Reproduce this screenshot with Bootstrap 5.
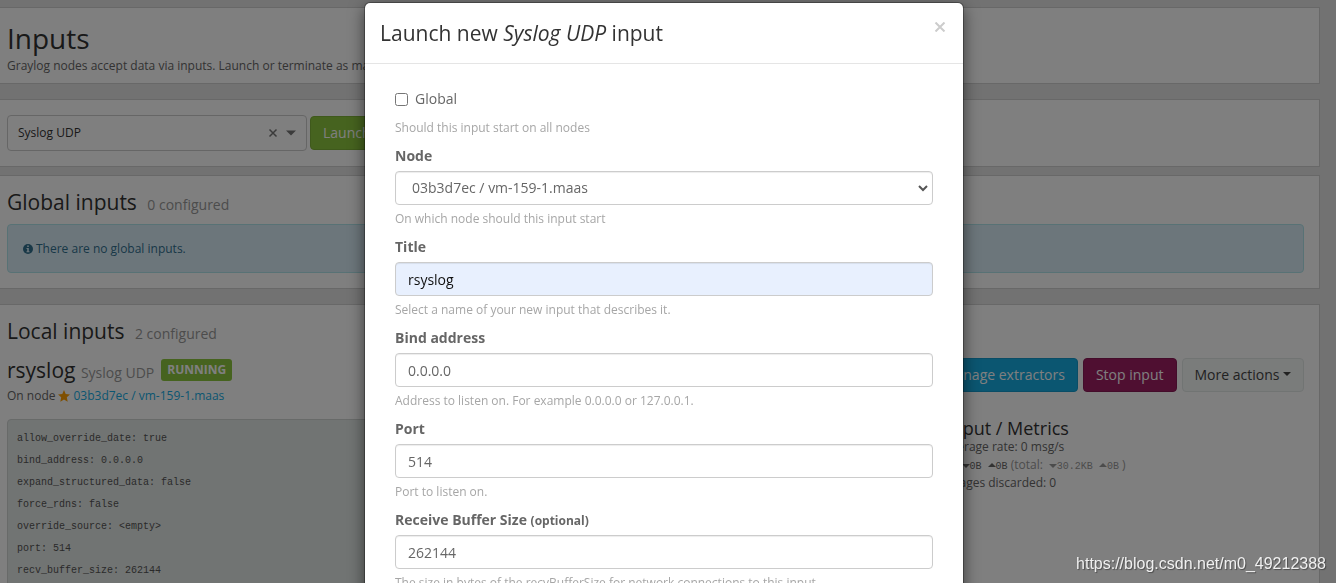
<!DOCTYPE html>
<html lang="en">
<head>
<meta charset="utf-8">
<meta name="viewport" content="width=device-width, initial-scale=1">
<title>Inputs</title>
<link href="https://cdn.jsdelivr.net/npm/bootstrap@5.3.0/dist/css/bootstrap.min.css" rel="stylesheet">
<style>
  body { background: #e5e5e5; color: #666; font-family: "Open Sans", sans-serif; font-size: 12px; line-height: 18px; overflow: hidden; }
  h1, h2, h3, h4 { font-weight: 400; color: #333; margin: 0; }
  .page { padding: 7px 16px 0 0; }
  .panel { background: #fff; border: 1px solid #d0d0d0; border-left: 0; padding: 12px 15px 15px 7px; margin-bottom: 15px; }
  .intro { padding-top: 14px; padding-bottom: 8px; }
  .launcher { padding-top: 15px; gap: 3px; }
  .panel h1 { font-size: 28px; line-height: 32px; margin-bottom: 3px; }
  .panel h2 { font-size: 21px; line-height: 28px; }
  .panel h3 { font-size: 18px; line-height: 20px; }
  .muted { color: #999; }
  .panel h2 small { font-size: 14px; line-height: 14px; }
  .count { margin-left: 5px; }
  .type-select { width: 300px; height: 36px; border: 1px solid #ccc; border-radius: 4px; padding: 0 10px; color: #333; font-size: 12px; background: #fff; }
  .btn { --bs-btn-font-size: 14px; --bs-btn-line-height: 20px; --bs-btn-padding-y: 6px; --bs-btn-padding-x: 12px; --bs-btn-border-radius: 4px; }
  .btn-launch { --bs-btn-bg: #8dc63f; --bs-btn-border-color: #7fb338; --bs-btn-color: #fff; }
  .btn-blue { --bs-btn-bg: #16ace3; --bs-btn-border-color: #149bcc; --bs-btn-color: #fff; }
  .btn-plum { --bs-btn-bg: #9e1f63; --bs-btn-border-color: #891b56; --bs-btn-color: #fff; }
  .btn-plain { --bs-btn-bg: #f4f8f7; --bs-btn-border-color: #e3e8e6; --bs-btn-color: #444; }
  .notice { background: #d9edf7; border: 1px solid #b0e4ea; border-radius: 4px; color: #31708f; padding: 15px; line-height: 17px; gap: 3px; }
  .input-head { margin-top: 11px; }
  .input-name { gap: 7px; margin-bottom: 3px; }
  .actions { gap: 5px; padding-top: 2px; }
  .state { background: #8dc63f; color: #fff; font-size: 12px; line-height: 14px; padding: 4px 6px; border-radius: 3px; font-weight: 700; }
  .node-line { gap: 3px; }
  .node-link { color: #16ace3; text-decoration: none; }
  .config { background: #e3e8e6; border: 1px solid #d0d4d3; border-radius: 4px; padding: 8px 9px; margin: 14px 0 0; color: #555; list-style: none; }
  .config, .mono { font-family: "Liberation Mono", monospace; font-size: 10px; }
  .config li { line-height: 22px; }
  .metrics { padding-top: 13px; }
  .mono, .mono svg { line-height: 10px; vertical-align: baseline; }
  .io-line { height: 18px; }
  .wide-gutter { --bs-gutter-x: 30px; }
  .modal { padding-right: 8px; --bs-modal-width: 600px; }
  .modal-dialog { margin-top: 2px; }
  .modal-content { border-radius: 6px; border-color: rgba(0,0,0,.3); box-shadow: 0 5px 15px rgba(0,0,0,.5); background-clip: padding-box; color: #666; }
  .modal-header { padding: 15px; border-color: #e5e5e5; align-items: flex-start; }
  .modal-title { font-size: 21px; line-height: 30px; }
  .modal-body { padding: 25px 30px; font-size: 14px; line-height: 20px; }
  .close-x { display: flex; border: 0; background: none; padding: 4px 2px; }
  .field { margin-bottom: 10px; }
  .field label.title { display: block; font-weight: 700; margin-bottom: 5px; }
  .field label small { font-size: 12px; line-height: 12px; }
  .check-row { gap: 7px; margin-bottom: 10px; }
  .form-control, .form-select { height: 34px; font-size: 14px; line-height: 20px; padding: 6px 12px; color: #666; border-color: #ccc; border-radius: 4px; box-shadow: inset 0 1px 1px rgba(0,0,0,.075); }
  .form-select { padding-left: 16px; background-position: right 4px center; background-size: 10px 10px; background-image: url("data:image/svg+xml,%3csvg xmlns='http://www.w3.org/2000/svg' viewBox='0 0 10 10'%3e%3cpath d='M1 3l4 4 4-4' fill='none' stroke='%23555' stroke-width='2'/%3e%3c/svg%3e"); }
  .filled { background: #e8f0fe; color: #111; }
  .help { display: block; font-size: 12px; line-height: 17px; margin-top: 5px; color: #a6a6a6; }
  .tick { width: 13px; height: 13px; margin: 0; }
  .watermark { z-index: 1070; right: 10px; bottom: 8px; color: #f0f0f0; font: 16px/22px "Liberation Sans", sans-serif; text-shadow: 1px 1px 1px rgba(0,0,0,.4); }
</style>
</head>
<body>
<svg class="d-none" aria-hidden="true">
  <symbol id="down" viewBox="0 0 8 8"><path d="M0 3h8L4 7z" fill="currentColor"/></symbol>
  <symbol id="up" viewBox="0 0 8 8"><path d="M0 6h8L4 2z" fill="currentColor"/></symbol>
</svg>
<main class="page">
  <section class="panel intro">
    <h1>Inputs</h1>
    <p class="mb-0 text-nowrap">Graylog nodes accept data via inputs. Launch or terminate as many inputs as you want here.</p>
  </section>
  <section class="panel launcher d-flex align-items-center mb-2">
    <button type="button" class="type-select d-flex align-items-center">
      <span class="me-auto">Syslog UDP</span>
      <svg class="me-2" width="10" height="10" viewBox="0 0 10 10" aria-hidden="true"><path d="M1.500 1.500l7 7M8.500 1.500l-7 7" stroke="#777" stroke-width="1.500"/></svg>
      <svg width="10" height="6" viewBox="0 0 10 6" aria-hidden="true"><path d="M0 .5h10l-5 5z" fill="#777"/></svg>
    </button>
    <button type="button" class="btn btn-launch">Launch new input</button>
  </section>
  <section class="panel">
    <h2 class="mb-2">Global inputs <small class="muted count">0 configured</small></h2>
    <div class="notice d-flex align-items-center">
      <svg width="10" height="10" viewBox="0 0 10 10" aria-hidden="true"><circle cx="5" cy="5" r="5" fill="#31708f"/><path d="M4.200 1.500h1.600v1.500H4.200zM3.500 4h2.300v3.200h.7v1h-3v-1h.7V5h-.7z" fill="#d9edf7"/></svg>
      There are no global inputs.
    </div>
  </section>
  <section class="panel">
    <h2>Local inputs <small class="muted count">2 configured</small></h2>
    <div class="input-head d-flex justify-content-between">
      <div>
        <h2 class="input-name d-flex align-items-center text-nowrap"><span>rsyslog <small class="muted">Syslog UDP</small></span><span class="state">RUNNING</span></h2>
        <div class="node-line d-flex align-items-center">On node
          <svg width="12" height="12" viewBox="0 0 12 12" aria-hidden="true"><path d="M6 0l1.700 4 4.300.4-3.200 2.900.9 4.400L6 9.400l-3.700 2.300.9-4.400L0 4.400l4.300-.4z" fill="#ff9e00"/></svg>
          <a class="node-link" href="#">03b3d7ec / vm-159-1.maas</a></div>
      </div>
      <div class="actions d-flex align-items-start text-nowrap">
        <button type="button" class="btn btn-blue">Manage extractors</button>
        <button type="button" class="btn btn-plum">Stop input</button>
        <button type="button" class="btn btn-plain dropdown-toggle">More actions</button>
      </div>
    </div>
    <div class="row wide-gutter">
      <div class="col-8">
        <ul class="config">
          <li>allow_override_date: true</li>
          <li>bind_address: 0.0.0.0</li>
          <li>expand_structured_data: false</li>
          <li>force_rdns: false</li>
          <li>override_source: &lt;empty&gt;</li>
          <li>port: 514</li>
          <li>recv_buffer_size: 262144</li>
        </ul>
      </div>
      <div class="col-4 metrics">
        <h3>Throughput / Metrics</h3>
        <div>1 minute average rate: 0 msg/s</div>
        <div class="io-line">Network IO: <span class="mono"><svg width="8" height="8"><use href="#down"/></svg>0B <svg width="8" height="8"><use href="#up"/></svg>0B</span> <span class="muted">(total:<span class="mono"> <svg width="8" height="8"><use href="#down"/></svg>30.2KB <svg width="8" height="8"><use href="#up"/></svg>0B</span> )</span></div>
        <div>Empty messages discarded: 0</div>
      </div>
    </div>
  </section>
</main>

<div class="modal-backdrop show"></div>
<div class="modal d-block overflow-hidden" role="dialog" aria-labelledby="dlg-title">
  <div class="modal-dialog">
    <form class="modal-content">
      <div class="modal-header">
        <h4 class="modal-title" id="dlg-title">Launch new <em>Syslog UDP</em> input</h4>
        <button type="button" class="close-x ms-auto" aria-label="Close"><svg width="12" height="10" viewBox="0 0 12 10" aria-hidden="true"><path d="M1.500.5l9 9M10.500.5l-9 9" stroke="#ccc" stroke-width="2"/></svg></button>
      </div>
      <div class="modal-body">
        <div class="field">
          <div class="check-row d-flex align-items-center"><input class="tick" type="checkbox" id="global"><label for="global">Global</label></div>
          <span class="help">Should this input start on all nodes</span>
        </div>
        <div class="field">
          <label class="title" for="node">Node</label>
          <select class="form-select" id="node"><option>03b3d7ec / vm-159-1.maas</option></select>
          <span class="help">On which node should this input start</span>
        </div>
        <div class="field">
          <label class="title" for="name">Title</label>
          <input class="form-control filled" id="name" type="text" value="rsyslog">
          <span class="help">Select a name of your new input that describes it.</span>
        </div>
        <div class="field">
          <label class="title" for="bind">Bind address</label>
          <input class="form-control" id="bind" type="text" value="0.0.0.0">
          <span class="help">Address to listen on. For example 0.0.0.0 or 127.0.0.1.</span>
        </div>
        <div class="field">
          <label class="title" for="port">Port</label>
          <input class="form-control" id="port" type="text" value="514">
          <span class="help">Port to listen on.</span>
        </div>
        <div class="field">
          <label class="title" for="buffer">Receive Buffer Size <small>(optional)</small></label>
          <input class="form-control" id="buffer" type="text" value="262144">
          <span class="help">The size in bytes of the recvBufferSize for network connections to this input.</span>
        </div>
      </div>
    </form>
  </div>
</div>
<div class="watermark position-fixed">https://blog.csdn.net/m0_49212388</div>
<script src="https://cdn.jsdelivr.net/npm/bootstrap@5.3.0/dist/js/bootstrap.bundle.min.js"></script>
</body>
</html>
